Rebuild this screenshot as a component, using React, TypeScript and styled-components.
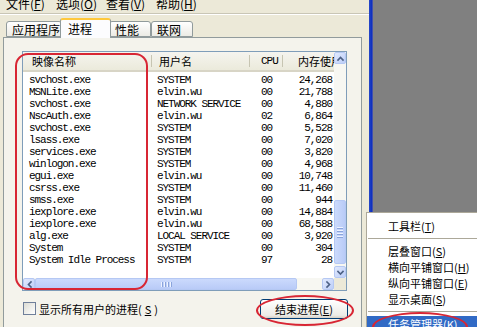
import React from 'react';
import styled, { createGlobalStyle } from 'styled-components';

const Global = createGlobalStyle`
  html, body { margin: 0; padding: 0; background: #808080; }
  body { width: 477px; height: 327px; overflow: hidden; font-family: "Noto Sans CJK SC", sans-serif; }
`;

const CJK = `"Noto Sans CJK SC", "Noto Sans", sans-serif`;
const MONO = `"Liberation Mono", "DejaVu Sans Mono", monospace`;

const Screen = styled.div`
  position: relative;
  width: 477px;
  height: 327px;
  overflow: hidden;
  display: grid;
  grid-template-columns: 369px 4px 1fr;
  background: #808080;
`;

const Window = styled.div`
  background: #ece9d8;
  display: flex;
  flex-direction: column;
  overflow: hidden;
`;

const WindowEdge = styled.div`
  background: linear-gradient(to right, #2a4ac8, #0b2fc0 60%, #5a5fa8);
`;

const Desktop = styled.div`
  background: #808080;
`;

const MenuBar = styled.div`
  height: 13px;
  display: grid;
  grid-template-columns: repeat(4, 50px);
  padding-left: 6px;
  border-bottom: 1px solid #c9c6b6;
  box-shadow: 0 1px 0 #ffffff;
  overflow: hidden;
`;

const MenuItem = styled.div`
  font-family: ${CJK};
  font-size: 12px;
  line-height: 12px;
  margin-top: -2px;
  color: #000;
  white-space: nowrap;
`;

const TabArea = styled.div`
  margin-top: 4px;
  padding: 0 7px 0 3px;
  display: flex;
  flex-direction: column;
  flex: 1;
  min-height: 0;
`;

const TabStrip = styled.div`
  display: flex;
  align-items: flex-end;
  height: 19px;
  padding-left: 3px;
  position: relative;
  z-index: 1;
`;

const Tab = styled.div<{ $active?: boolean; $w: number }>`
  box-sizing: border-box;
  width: ${p => p.$w}px;
  height: ${p => (p.$active ? 20 : 16)}px;
  margin-bottom: ${p => (p.$active ? -1 : 0)}px;
  margin-left: ${p => (p.$active ? -2 : 0)}px;
  margin-right: ${p => (p.$active ? -2 : 0)}px;
  border: 1px solid #919b9c;
  border-bottom: ${p => (p.$active ? 'none' : '1px solid #919b9c')};
  border-top: ${p => (p.$active ? '2px solid #ffc83c' : '1px solid #919b9c')};
  border-radius: 3px 3px 0 0;
  background: ${p => (p.$active ? '#fcfcfe' : 'linear-gradient(#ffffff, #ecebe5)')};
  font-family: ${CJK};
  font-size: 12px;
  line-height: 13px;
  color: #000;
  padding-left: ${p => (p.$active ? 7 : 5)}px;
  padding-top: ${p => (p.$active ? 2 : 1)}px;
  white-space: nowrap;
  position: relative;
  z-index: ${p => (p.$active ? 2 : 1)};
`;

const Panel = styled.div`
  flex: 1;
  border: 1px solid #919b9c;
  border-bottom: none;
  background: #f4f3ec;
  padding: 13px 14px 0 18px;
  display: flex;
  flex-direction: column;
  gap: 7px;
`;

const ListView = styled.div`
  width: 325px;
  height: 240px;
  box-sizing: border-box;
  border: 1px solid #7f9db9;
  background: #ffffff;
  display: grid;
  grid-template-columns: 1fr 12px;
  grid-template-rows: 1fr 12px;
  overflow: hidden;
`;

const ListContent = styled.div`
  overflow: hidden;
  display: flex;
  flex-direction: column;
`;

const RowsBody = styled.div`
  padding-top: 2px;
  display: flex;
  flex-direction: column;
`;

const COLS = '129px 98px 33px 60px';

const HeaderRow = styled.div`
  height: 20px;
  box-sizing: border-box;
  display: grid;
  grid-template-columns: ${COLS};
  background: linear-gradient(#f5f4ef, #ebeadb);
  border-bottom: 2px solid #d8d5c6;
  flex-shrink: 0;
`;

const HeaderCell = styled.div<{ $pad: number; $mono?: boolean }>`
  position: relative;
  padding-left: ${p => p.$pad}px;
  font-family: ${p => (p.$mono ? MONO : CJK)};
  font-size: 11px;
  letter-spacing: ${p => (p.$mono ? '-1px' : '0')};
  line-height: 18px;
  color: #000;
  white-space: nowrap;
  overflow: hidden;
  &::after {
    content: '';
    position: absolute;
    right: 0;
    top: 3px;
    bottom: 3px;
    width: 1px;
    background: #c7c5b2;
    box-shadow: 1px 0 0 #fff;
  }
`;

const Row = styled.div`
  height: 12px;
  display: grid;
  grid-template-columns: ${COLS};
  flex-shrink: 0;
`;

const Cell = styled.div<{ $pad: number; $right?: boolean }>`
  font-family: ${MONO};
  font-size: 11px;
  letter-spacing: -1.05px;
  line-height: 12px;
  color: #000;
  white-space: nowrap;
  overflow: hidden;
  padding-left: ${p => (p.$right ? 0 : p.$pad)}px;
  padding-right: ${p => (p.$right ? p.$pad : 0)}px;
  text-align: ${p => (p.$right ? 'right' : 'left')};
`;

const VScroll = styled.div`
  background: #f7f7f2;
  display: flex;
  flex-direction: column;
`;

const HScroll = styled.div`
  background: #f7f7f2;
  display: flex;
  flex-direction: row;
`;

const ScrollBtn = styled.div`
  box-sizing: border-box;
  width: 12px;
  height: 12px;
  flex-shrink: 0;
  border: 1px solid #b5c8f3;
  border-radius: 2px;
  background: linear-gradient(135deg, #e2eafe, #bccef8);
  display: flex;
  align-items: center;
  justify-content: center;
`;

const Track = styled.div`
  flex: 1;
  position: relative;
`;

const VThumb = styled.div`
  position: absolute;
  left: 0;
  right: 0;
  box-sizing: border-box;
  border: 1px solid #b5c8f3;
  border-radius: 2px;
  background: linear-gradient(to right, #cbdafc, #b9cbf7);
  display: flex;
  flex-direction: column;
  align-items: center;
  justify-content: center;
  gap: 1px;
`;

const HThumb = styled.div`
  position: absolute;
  top: 0;
  bottom: 0;
  box-sizing: border-box;
  border: 1px solid #b5c8f3;
  border-radius: 2px;
  background: linear-gradient(#cbdafc, #b9cbf7);
  display: flex;
  align-items: center;
  justify-content: center;
  gap: 1px;
`;

const GripH = styled.div`
  width: 6px;
  height: 1px;
  background: #eef3ff;
  box-shadow: 0 1px 0 #8aa4dc;
  margin-bottom: 1px;
`;

const GripV = styled.div`
  width: 1px;
  height: 5px;
  background: #eef3ff;
  box-shadow: 1px 0 0 #8aa4dc;
  margin-right: 1px;
`;

const Corner = styled.div`
  background: #ece9d8;
`;

const BottomRow = styled.div`
  display: flex;
  align-items: center;
  justify-content: space-between;
  width: 325px;
  height: 21px;
`;

const CheckLabel = styled.label`
  display: flex;
  align-items: center;
  gap: 3px;
  padding-left: 1px;
  font-family: ${CJK};
  font-size: 11px;
  color: #000;
  white-space: nowrap;
`;

const CheckBox = styled.span`
  width: 13px;
  height: 13px;
  box-sizing: border-box;
  border: 1px solid #6f7f9a;
  background: linear-gradient(135deg, #dcdcd4, #ffffff);
`;

const Button = styled.button`
  width: 88px;
  height: 20px;
  box-sizing: border-box;
  border: 1px solid #003c74;
  border-radius: 3px;
  background: linear-gradient(#ffffff, #ecebe6 85%, #d6d0c5);
  font-family: ${CJK};
  font-size: 11px;
  color: #000;
  padding: 0;
  margin-right: -1px;
  white-space: nowrap;
`;

const Annotation = styled.div<{ $round?: boolean }>`
  position: absolute;
  border: 2px solid #d82634;
  border-radius: ${p => (p.$round ? '50%' : '13px')};
  pointer-events: none;
  z-index: 10;
`;

const ContextMenu = styled.div`
  position: absolute;
  left: 366px;
  top: 212px;
  width: 120px;
  height: 130px;
  box-sizing: border-box;
  background: #ffffff;
  border: 1px solid #aca899;
  padding-top: 5px;
  display: flex;
  flex-direction: column;
  z-index: 5;
`;

const CtxItem = styled.div<{ $hl?: boolean }>`
  height: 16px;
  line-height: 16px;
  padding-left: 21px;
  font-family: ${CJK};
  font-size: 11px;
  color: ${p => (p.$hl ? '#fff' : '#000')};
  background: ${p => (p.$hl ? '#316ac5' : 'transparent')};
  white-space: nowrap;
  flex-shrink: 0;
`;

const CtxSep = styled.div`
  height: 1px;
  margin: 4px 1px 4px;
  background: #aca899;
  flex-shrink: 0;
`;

const Arrow = ({ dir, color = '#4d6185' }: { dir: 'up' | 'down' | 'left' | 'right'; color?: string }) => {
  const d = {
    up: 'M2 6 L4.5 3.5 L7 6',
    down: 'M2 3.5 L4.5 6 L7 3.5',
    left: 'M6 2 L3.5 4.5 L6 7',
    right: 'M3 2 L5.5 4.5 L3 7',
  }[dir];
  return (
    <svg width="9" height="9" viewBox="0 0 9 9">
      <path d={d} fill="none" stroke={color} strokeWidth="1.6" strokeLinecap="square" />
    </svg>
  );
};

const processes: [string, string, string, string][] = [
  ['svchost.exe', 'SYSTEM', '00', '24,268'],
  ['MSNLite.exe', 'elvin.wu', '00', '21,788'],
  ['svchost.exe', 'NETWORK SERVICE', '00', '4,880'],
  ['NscAuth.exe', 'elvin.wu', '02', '6,864'],
  ['svchost.exe', 'SYSTEM', '00', '5,528'],
  ['lsass.exe', 'SYSTEM', '00', '7,020'],
  ['services.exe', 'SYSTEM', '00', '3,820'],
  ['winlogon.exe', 'SYSTEM', '00', '4,968'],
  ['egui.exe', 'elvin.wu', '00', '10,748'],
  ['csrss.exe', 'SYSTEM', '00', '11,460'],
  ['smss.exe', 'SYSTEM', '00', '944'],
  ['iexplore.exe', 'elvin.wu', '00', '14,884'],
  ['iexplore.exe', 'elvin.wu', '00', '68,588'],
  ['alg.exe', 'LOCAL SERVICE', '00', '3,920'],
  ['System', 'SYSTEM', '00', '304'],
  ['System Idle Process', 'SYSTEM', '97', '28'],
];

const Acc = ({ label, k }: { label: string; k: string }) => (
  <>
    {label}(<u>{k}</u>)
  </>
);

export default function App() {
  const vThumb = { top: 136, height: 64 };
  const hThumb = { left: 0, width: 262 };
  return (
    <Screen>
      <Global />
      <Window>
        <MenuBar>
          <MenuItem><Acc label="文件" k="F" /></MenuItem>
          <MenuItem><Acc label="选项" k="O" /></MenuItem>
          <MenuItem><Acc label="查看" k="V" /></MenuItem>
          <MenuItem><Acc label="帮助" k="H" /></MenuItem>
        </MenuBar>
        <TabArea>
          <TabStrip>
            <Tab $w={56}>应用程序</Tab>
            <Tab $w={51} $active>进程</Tab>
            <Tab $w={42}>性能</Tab>
            <Tab $w={42}>联网</Tab>
          </TabStrip>
          <Panel>
            <ListView>
              <ListContent>
                <HeaderRow>
                  <HeaderCell $pad={9}>映像名称</HeaderCell>
                  <HeaderCell $pad={7}>用户名</HeaderCell>
                  <HeaderCell $pad={11} $mono>CPU</HeaderCell>
                  <HeaderCell $pad={15}>内存使用</HeaderCell>
                </HeaderRow>
                <RowsBody>
                  {processes.map(([n, u, c, m], i) => (
                    <Row key={i}>
                      <Cell $pad={6}>{n}</Cell>
                      <Cell $pad={5}>{u}</Cell>
                      <Cell $pad={11}>{c}</Cell>
                      <Cell $pad={11} $right>{m}</Cell>
                    </Row>
                  ))}
                </RowsBody>
              </ListContent>
              <VScroll>
                <ScrollBtn><Arrow dir="up" /></ScrollBtn>
                <Track>
                  <VThumb style={{ top: vThumb.top, height: vThumb.height }}>
                    <GripH /><GripH /><GripH /><GripH />
                  </VThumb>
                </Track>
                <ScrollBtn><Arrow dir="down" /></ScrollBtn>
              </VScroll>
              <HScroll>
                <ScrollBtn><Arrow dir="left" /></ScrollBtn>
                <Track>
                  <HThumb style={{ left: hThumb.left, width: hThumb.width }}>
                    <GripV /><GripV /><GripV /><GripV />
                  </HThumb>
                </Track>
                <ScrollBtn><Arrow dir="right" /></ScrollBtn>
              </HScroll>
              <Corner />
            </ListView>
            <BottomRow>
              <CheckLabel>
                <CheckBox />
                显示所有用户的进程(<u>S</u>)
              </CheckLabel>
              <Button>结束进程(<u>E</u>)</Button>
            </BottomRow>
          </Panel>
        </TabArea>
      </Window>
      <WindowEdge />
      <Desktop />
      <ContextMenu>
        <CtxItem>工具栏(<u>T</u>)</CtxItem>
        <CtxSep />
        <CtxItem>层叠窗口(<u>S</u>)</CtxItem>
        <CtxItem>横向平铺窗口(<u>H</u>)</CtxItem>
        <CtxItem>纵向平铺窗口(<u>E</u>)</CtxItem>
        <CtxItem>显示桌面(<u>S</u>)</CtxItem>
        <CtxSep />
        <CtxItem $hl>任务管理器(<u>K</u>)</CtxItem>
      </ContextMenu>
      <Annotation style={{ left: 15, top: 53, width: 129, height: 233 }} />
      <Annotation $round style={{ left: 256, top: 295, width: 94, height: 27 }} />
      <Annotation $round style={{ left: 372, top: 312, width: 92, height: 26 }} />
    </Screen>
  );
}
